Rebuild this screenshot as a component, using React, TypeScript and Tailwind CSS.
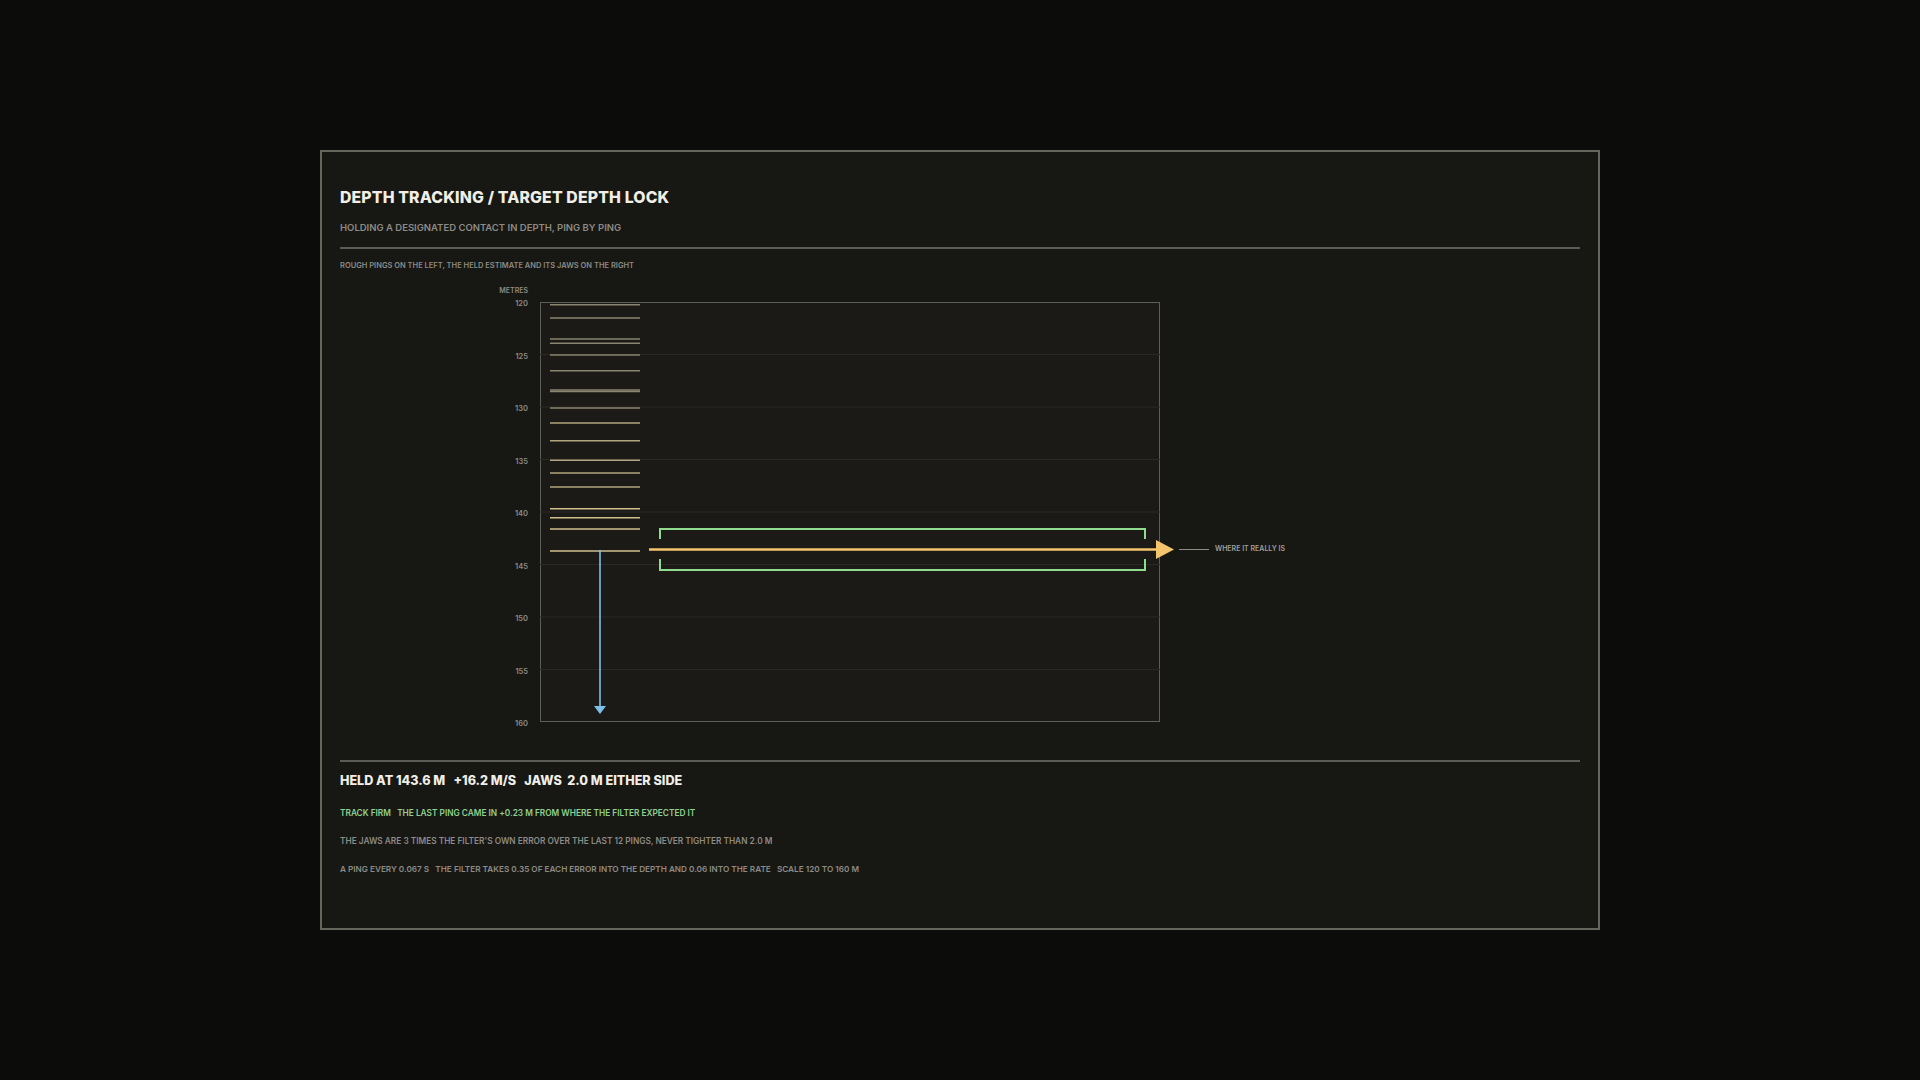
const pings = [302.7,316,337,341.3,353,368.7,388,389.5,406,421,438.7,458.3,471,485,506.7,515.7,527,549];
const labels = [120,125,130,135,140,145,150,155,160];

export default function App() {
  const font = { fontFamily: 'Inter, "Liberation Sans", sans-serif' };
  return (
    <div className="w-[1920px] h-[1080px] bg-[#0c0c0a] flex items-start justify-center pt-[150px]" style={font}>
      <div className="w-[1280px] h-[780px] border-2 border-[#66655e] bg-[#171714] px-[18px] pt-[36px] flex flex-col">
        <div className="text-[15.8px] font-extrabold text-[#f0eee6] tracking-[0.01em] leading-[20px]">DEPTH TRACKING / TARGET DEPTH LOCK</div>
        <div className="mt-[14px] text-[9.5px] font-semibold text-[#8c8b84] leading-[12px]">HOLDING A DESIGNATED CONTACT IN DEPTH, PING BY PING</div>
        <div className="mt-[13px] h-[2px] bg-[#5c5b55]" />
        <div className="mt-[12px] text-[7.5px] font-semibold text-[#8c8b84] leading-[10px]">ROUGH PINGS ON THE LEFT, THE HELD ESTIMATE AND ITS JAWS ON THE RIGHT</div>
        <div className="flex mt-[15px]">
          <div className="w-[190px] relative h-[440px]">
            <div className="absolute right-[2px] top-0 text-[7px] font-semibold text-[#8c8b84]">METRES</div>
            {labels.map((l, i) => (
              <div key={l} className="absolute right-[2px] text-[7.5px] font-semibold text-[#8c8b84] leading-[10px]" style={{ top: 18 + i * 52.5 - 5 }}>{l}</div>
            ))}
          </div>
          <div className="mt-[16px] relative w-[620px] h-[420px] border border-[#5e5d57] bg-[#1b1a17] ml-[10px]">
            <svg className="absolute left-[-1px] top-[-1px] overflow-visible" width="620" height="420">
              {[1,2,3,4,5,6,7].map(i => (
                <line key={i} x1="0" x2="620" y1={i * 52.5} y2={i * 52.5} stroke="#2a2925" strokeWidth="1" />
              ))}
              {pings.map((y, i) => {
                const t = i / (pings.length - 1);
                const c = t < 0.5 ? '#8a8470' : t < 0.8 ? '#b0a57e' : '#cfc08e';
                return <line key={i} x1="10" x2="100" y1={y - 300} y2={y - 300} stroke={c} strokeWidth="1.6" />;
              })}
              <line x1="60" x2="60" y1="248" y2="405" stroke="#7ec0ea" strokeWidth="1.6" />
              <polygon points="54,404 66,404 60,412" fill="#7ec0ea" />
              <polyline points="120,237 120,227 605,227 605,237" fill="none" stroke="#8fdc8f" strokeWidth="2" />
              <polyline points="120,257 120,268 605,268 605,257" fill="none" stroke="#8fdc8f" strokeWidth="2" />
              <line x1="109" x2="618" y1="247.5" y2="247.5" stroke="#f5c46c" strokeWidth="2.5" />
              <polygon points="616,238 634,247.5 616,257" fill="#f5c46c" />
            </svg>
          </div>
          <div className="mt-[16px] relative h-[420px]">
            <div className="absolute top-[242px] left-[19px] flex items-center gap-[6px] whitespace-nowrap">
              <div className="w-[30px] h-[1.5px] bg-[#8c8b84]" />
              <span className="text-[7px] font-semibold text-[#a09f98]">WHERE IT REALLY IS</span>
            </div>
          </div>
        </div>
        <div className="mt-[34px] h-[2px] bg-[#5c5b55]" />
        <div className="mt-[11px] text-[12.6px] font-extrabold text-[#f0eee6] leading-[16px] whitespace-pre">HELD AT 143.6 M   +16.2 M/S   JAWS  2.0 M EITHER SIDE</div>
        <div className="mt-[19px] text-[8.3px] font-semibold text-[#8fd08f] leading-[10px] whitespace-pre">TRACK FIRM   THE LAST PING CAME IN +0.23 M FROM WHERE THE FILTER EXPECTED IT</div>
        <div className="mt-[18px] text-[8.3px] font-semibold text-[#8c8b84] leading-[10px]">THE JAWS ARE 3 TIMES THE FILTER'S OWN ERROR OVER THE LAST 12 PINGS, NEVER TIGHTER THAN 2.0 M</div>
        <div className="mt-[18px] text-[8.2px] font-semibold text-[#8c8b84] leading-[10px] whitespace-pre">A PING EVERY 0.067 S   THE FILTER TAKES 0.35 OF EACH ERROR INTO THE DEPTH AND 0.06 INTO THE RATE   SCALE 120 TO 160 M</div>
      </div>
    </div>
  );
}
